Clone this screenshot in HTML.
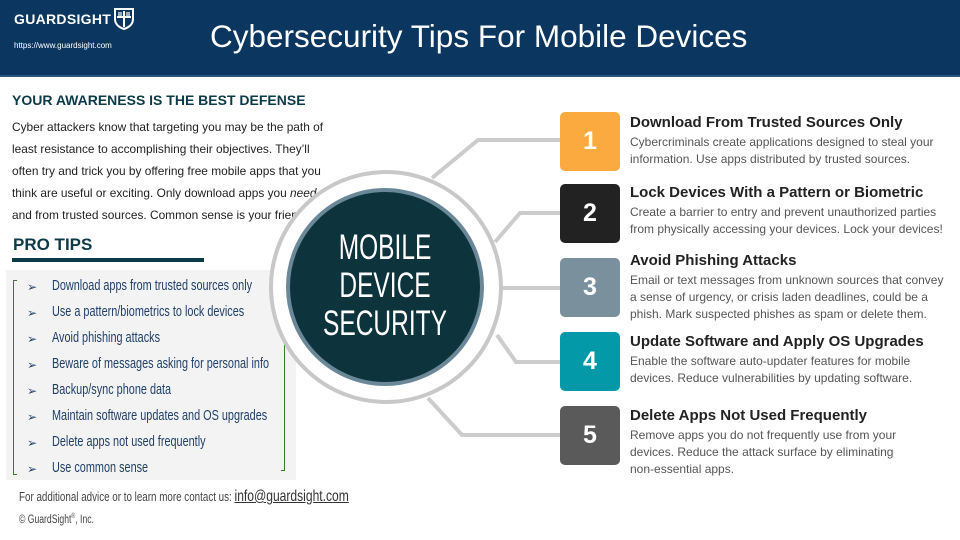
<!DOCTYPE html>
<html><head><meta charset="utf-8"><style>
*{margin:0;padding:0;box-sizing:border-box}
body{width:960px;height:540px;overflow:hidden;background:#fff;font-family:"Liberation Sans",sans-serif;position:relative}
.t{position:absolute;white-space:nowrap;line-height:1}
.hdr{position:absolute;left:0;top:0;width:960px;height:77px;background:#0a3660;border-bottom:2px solid #2c5680}
.p{font-size:12px;color:#222;transform-origin:0 50%;transform:scaleX(0.99)}
.n{transform-origin:0 50%;transform:scaleX(0.75)}
.tip{font-size:14.5px;color:#1f3f6a}
.arr{font-size:12px;color:#1f3f6a}
.h{font-size:15px;font-weight:bold;color:#222}
.b{font-size:12px;color:#555}
.box{position:absolute;left:560px;width:60px;height:59px;border-radius:5px;color:#fff;font-weight:bold;font-size:25px;text-align:center;line-height:59px}
</style></head><body>
<div class="hdr"></div>
<div class="t" style="left:14px;top:12px;font-size:14px;font-weight:bold;color:#fff;letter-spacing:0.3px">GUARDSIGHT</div>
<svg style="position:absolute;left:114px;top:8px" width="20" height="22" viewBox="0 0 20 22"><path d="M1 1H19V11Q19 18 10 21Q1 18 1 11Z" fill="none" stroke="#fff" stroke-width="2"/><path d="M10 3V19M3 9H17" stroke="#fff" stroke-width="2"/><path d="M4 4H8V8H4ZM12 4H16V8H12Z" fill="#fff" opacity=".6"/></svg>
<div class="t" style="left:14px;top:42px;font-size:8px;color:#fff">https://www.guardsight.com</div>
<div class="t" style="left:210px;top:21px;font-size:31.5px;color:#fff">Cybersecurity Tips For Mobile Devices</div>

<div class="t" style="left:12px;top:93px;font-size:14px;font-weight:bold;color:#0d3a48">YOUR AWARENESS IS THE BEST DEFENSE</div>
<div class="t p" style="left:12px;top:121px">Cyber attackers know that targeting you may be the path of</div>
<div class="t p" style="left:12px;top:143px">least resistance to accomplishing their objectives. They’ll</div>
<div class="t p" style="left:12px;top:165px">often try and trick you by offering free mobile apps that you</div>
<div class="t p" style="left:12px;top:187px">think are useful or exciting. Only download apps you <i>need</i></div>
<div class="t p" style="left:12px;top:209px">and from trusted sources. Common sense is your friend!</div>

<div class="t" style="left:13px;top:236px;font-size:17px;font-weight:bold;color:#0d3a48">PRO TIPS</div>
<div style="position:absolute;left:12px;top:258px;width:192px;height:4px;background:#0d3a48"></div>
<div style="position:absolute;left:6px;top:270px;width:290px;height:210px;background:#f3f3f3"></div>
<div style="position:absolute;left:13px;top:280px;width:4px;height:195px;border:1px solid #3a7a2a;border-right:none"></div>
<div style="position:absolute;left:281px;top:277px;width:4px;height:194px;border:1px solid #3a7a2a;border-left:none"></div>

<div class="t arr" style="left:27px;top:281px">➢</div><div class="t tip n" style="left:52px;top:279px">Download apps from trusted sources only</div>
<div class="t arr" style="left:27px;top:307px">➢</div><div class="t tip n" style="left:52px;top:305px">Use a pattern/biometrics to lock devices</div>
<div class="t arr" style="left:27px;top:333px">➢</div><div class="t tip n" style="left:52px;top:331px">Avoid phishing attacks</div>
<div class="t arr" style="left:27px;top:359px">➢</div><div class="t tip n" style="left:52px;top:357px">Beware of messages asking for personal info</div>
<div class="t arr" style="left:27px;top:385px">➢</div><div class="t tip n" style="left:52px;top:383px">Backup/sync phone data</div>
<div class="t arr" style="left:27px;top:411px">➢</div><div class="t tip n" style="left:52px;top:409px">Maintain software updates and OS upgrades</div>
<div class="t arr" style="left:27px;top:437px">➢</div><div class="t tip n" style="left:52px;top:435px">Delete apps not used frequently</div>
<div class="t arr" style="left:27px;top:463px">➢</div><div class="t tip n" style="left:52px;top:461px">Use common sense</div>

<div class="t" style="left:19px;top:489px;font-size:13px;color:#444;transform-origin:0 50%;transform:scaleX(0.755)">For additional advice or to learn more contact us: <span style="font-size:16px;text-decoration:underline;color:#333">info@guardsight.com</span></div>
<div class="t n" style="left:19px;top:513px;font-size:11.5px;color:#444">© GuardSight<sup style="font-size:7px">®</sup>, Inc.</div>

<svg style="position:absolute;left:0;top:0" width="960" height="540">
<g stroke="#cccccc" stroke-width="4" fill="none">
<polyline points="560,140 478,140 432,178"/>
<polyline points="560,213 520,213 495,242"/>
<polyline points="560,288 503,288"/>
<polyline points="560,362 516,362 497,335"/>
<polyline points="560,435 462,435 428,398"/>
</g>
<circle cx="386" cy="287" r="115" fill="#fff" stroke="#c8c8c8" stroke-width="4"/>
<circle cx="385" cy="287" r="97" fill="#0d333c" stroke="#6b8898" stroke-width="4"/>
</svg>
<div class="t" style="left:285px;top:229px;width:200px;text-align:center;font-size:35px;color:#fff;line-height:38px;white-space:normal"><div style="transform:scaleX(0.7)">MOBILE<br>DEVICE<br>SECURITY</div></div>

<div class="box" style="top:112px;background:#fbaa40">1</div>
<div class="box" style="top:184px;background:#222">2</div>
<div class="box" style="top:258px;background:#7a909d">3</div>
<div class="box" style="top:332px;background:#0499a8">4</div>
<div class="box" style="top:406px;background:#5a5a5a">5</div>

<div class="t h" style="left:630px;top:115px">Download From Trusted Sources Only</div>
<div class="t b" style="left:630px;top:136px">Cybercriminals create applications designed to steal your</div>
<div class="t b" style="left:630px;top:153px">information. Use apps distributed by trusted sources.</div>

<div class="t h" style="left:630px;top:185px">Lock Devices With a Pattern or Biometric</div>
<div class="t b" style="left:630px;top:206px">Create a barrier to entry and prevent unauthorized parties</div>
<div class="t b" style="left:630px;top:223px">from physically accessing your devices. Lock your devices!</div>

<div class="t h" style="left:630px;top:253px">Avoid Phishing Attacks</div>
<div class="t b" style="left:630px;top:274px">Email or text messages from unknown sources that convey</div>
<div class="t b" style="left:630px;top:291px">a sense of urgency, or crisis laden deadlines, could be a</div>
<div class="t b" style="left:630px;top:308px">phish. Mark suspected phishes as spam or delete them.</div>

<div class="t h" style="left:630px;top:334px">Update Software and Apply OS Upgrades</div>
<div class="t b" style="left:630px;top:355px">Enable the software auto-updater features for mobile</div>
<div class="t b" style="left:630px;top:372px">devices. Reduce vulnerabilities by updating software.</div>

<div class="t h" style="left:630px;top:408px">Delete Apps Not Used Frequently</div>
<div class="t b" style="left:630px;top:429px">Remove apps you do not frequently use from your</div>
<div class="t b" style="left:630px;top:446px">devices. Reduce the attack surface by eliminating</div>
<div class="t b" style="left:630px;top:463px">non-essential apps.</div>
</body></html>
